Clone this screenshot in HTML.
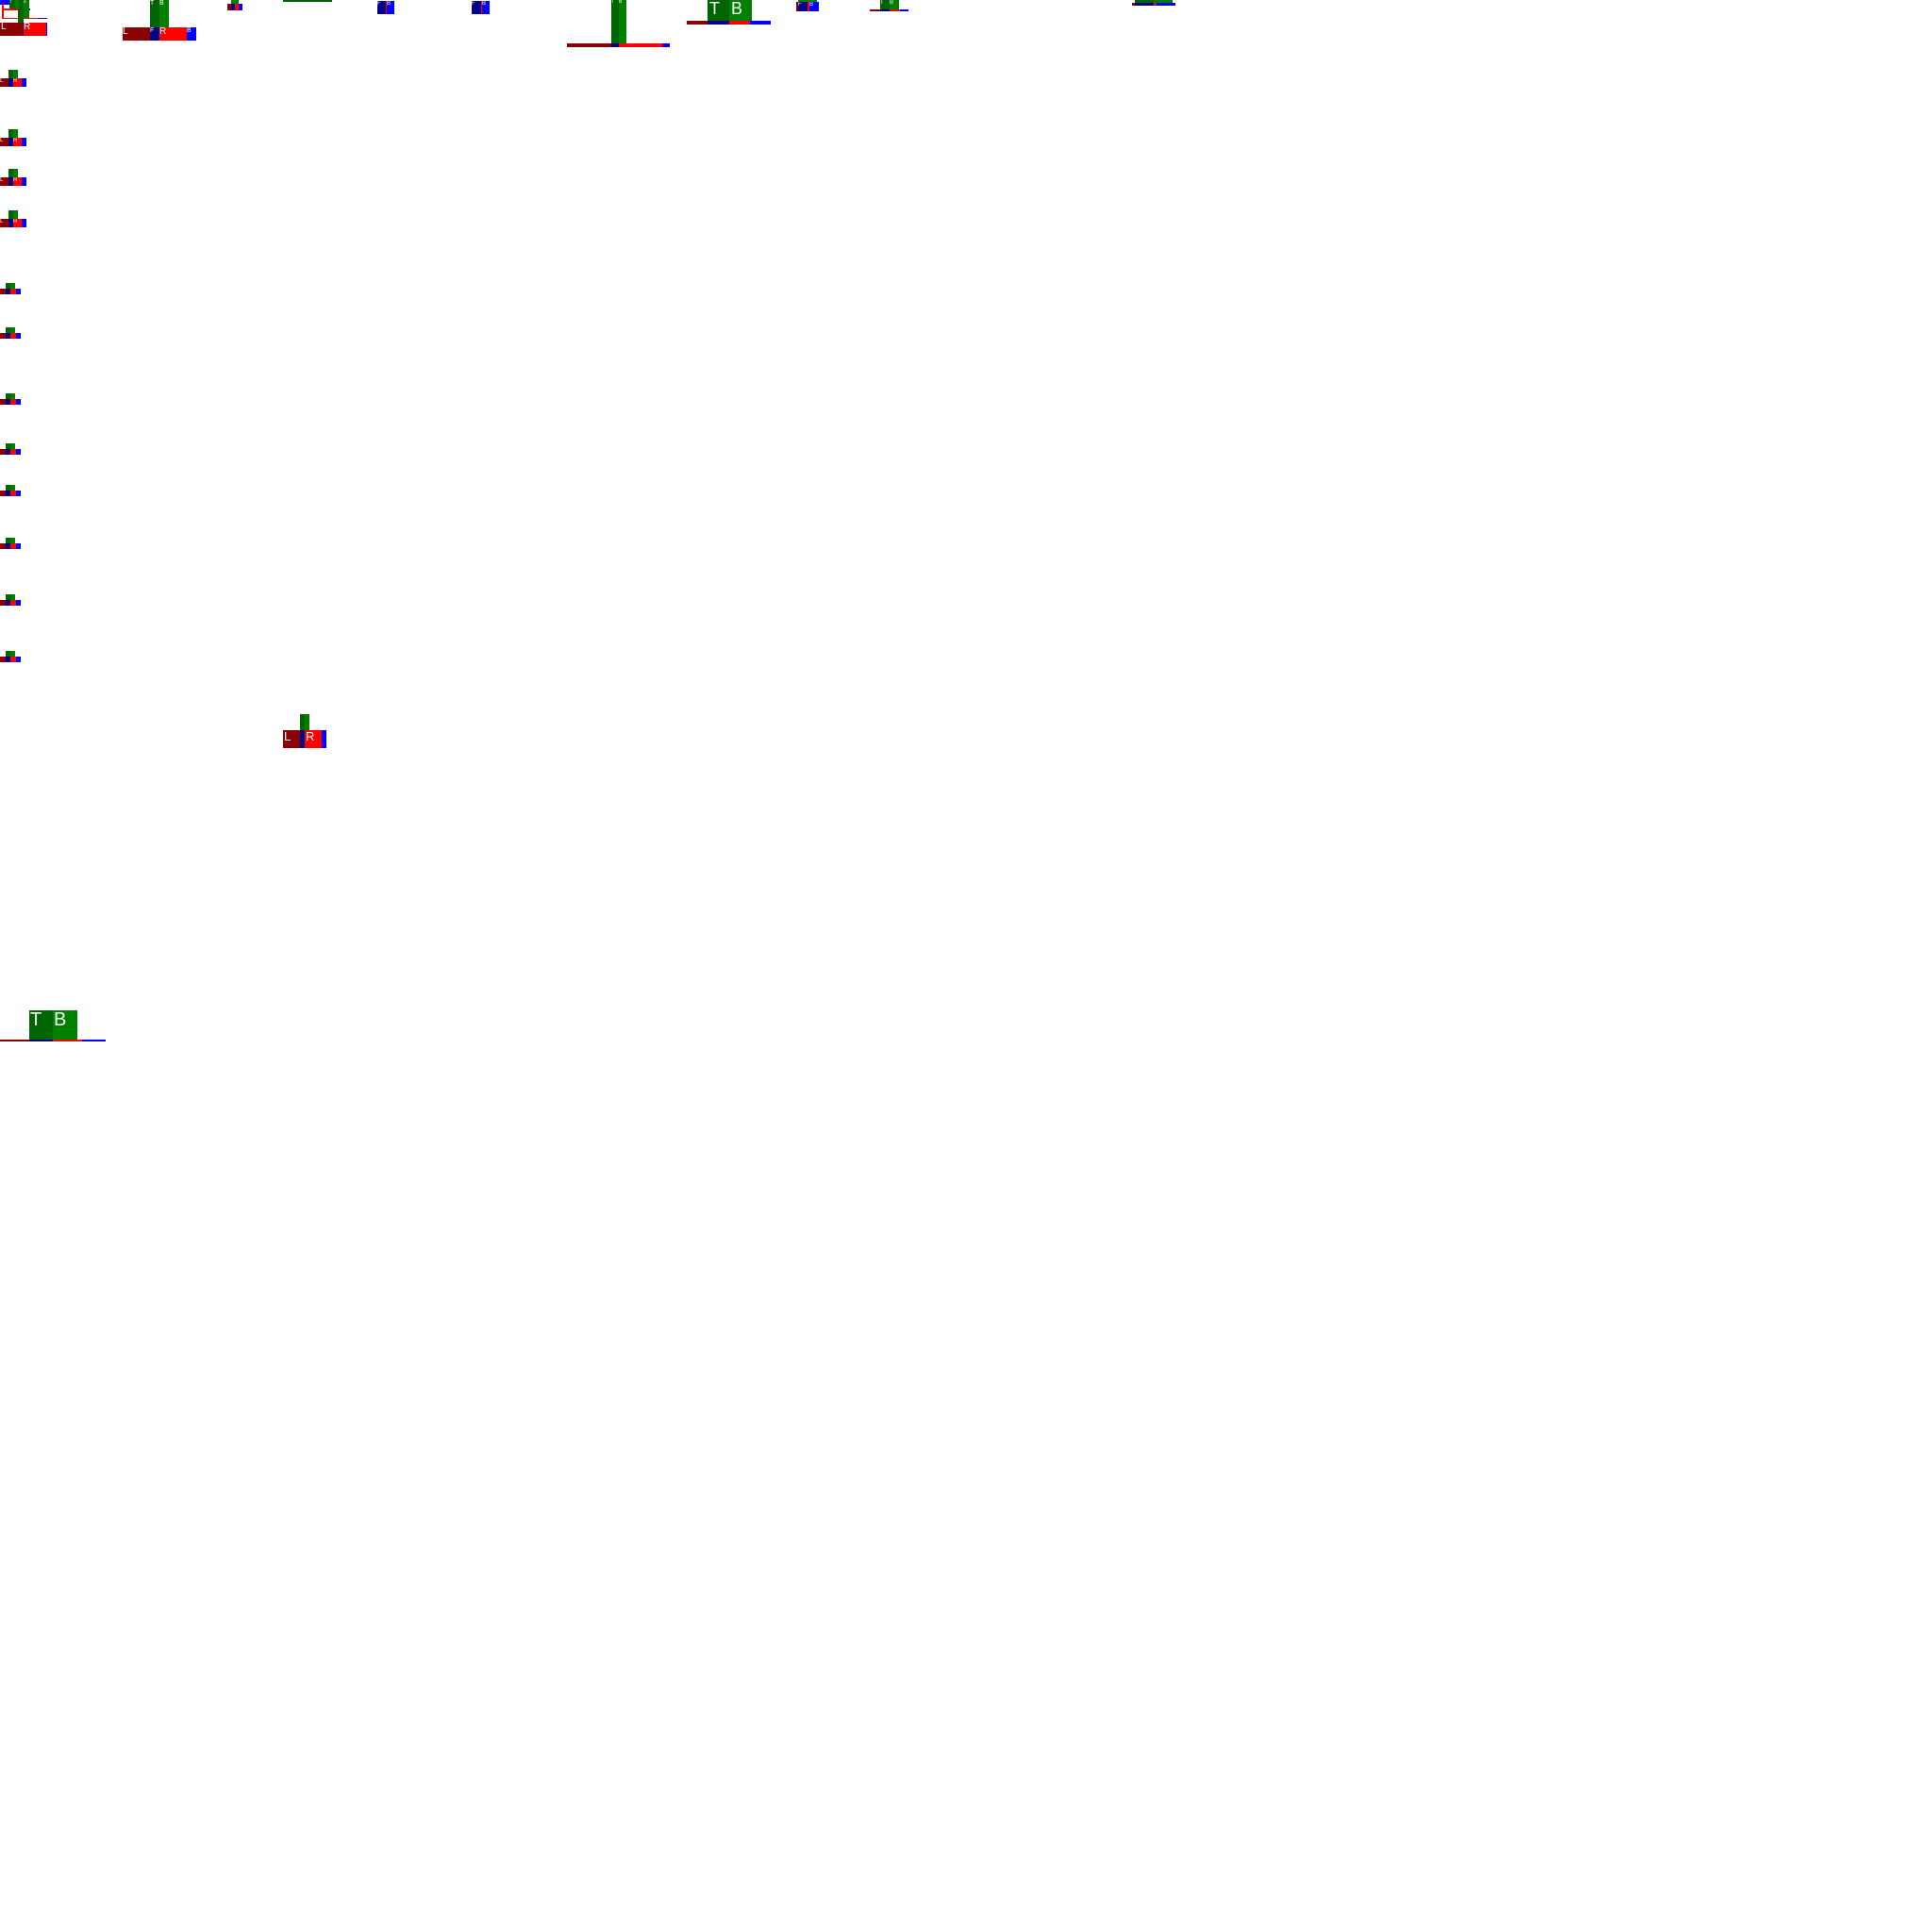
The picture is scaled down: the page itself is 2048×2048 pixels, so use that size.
<!DOCTYPE html>
<html><head><meta charset="utf-8"><style>
html,body{margin:0;padding:0;width:2048px;height:2048px;background:#fff;overflow:hidden;position:relative;font-family:"Liberation Sans",sans-serif}
div{position:absolute;color:#fff;overflow:hidden;line-height:1}
.dg{background:#006400}.g{background:#008000}.l{background:#8b0000}.f{background:#00008b}.r{background:#ff0000}.b{background:#0000ff}
</style></head><body>
<!-- cluster 1 -->
<div class="b" style="left:0;top:0;width:10px;height:5px"></div>
<div class="r" style="left:2px;top:4px;width:2px;height:16px"></div>
<div class="r" style="left:4px;top:9px;width:24px;height:2px"></div>
<div class="b" style="left:20px;top:9px;width:12px;height:2px"></div>
<div class="r" style="left:4px;top:19px;width:40px;height:1px"></div>
<div class="b" style="left:40px;top:19px;width:10px;height:1px"></div>
<div class="dg" style="left:19px;top:0;width:6px;height:24px"></div>
<div class="g" style="left:25px;top:0;width:6px;height:19px;font-size:4px">B</div>
<div class="dg" style="left:10px;top:0;width:6px;height:9px;font-size:4px">T</div>
<div class="g" style="left:16px;top:0;width:4px;height:9px"></div>
<div class="l" style="left:0;top:24px;width:24px;height:14px;font-size:10px;padding-left:1px">L</div>
<div class="f" style="left:24px;top:24px;width:1px;height:14px"></div>
<div class="r" style="left:25px;top:24px;width:24px;height:14px;font-size:10px">R</div>
<div class="b" style="left:49px;top:24px;width:1px;height:14px"></div>
<!-- cluster 2 -->
<div class="dg" style="left:159px;top:0;width:10px;height:29px;font-size:7px">T</div>
<div class="g" style="left:169px;top:0;width:10px;height:29px;font-size:7px">B</div>
<div class="l" style="left:130px;top:29px;width:29px;height:14px;font-size:10px">L</div>
<div class="f" style="left:159px;top:29px;width:10px;height:14px;font-size:7px">F</div>
<div class="r" style="left:169px;top:29px;width:29px;height:14px;font-size:10px">R</div>
<div class="b" style="left:198px;top:29px;width:10px;height:14px;font-size:7px">B</div>
<!-- cluster 3 -->
<div class="g" style="left:245px;top:0;width:8px;height:4px"></div>
<div class="l" style="left:241px;top:4px;width:4px;height:7px"></div>
<div class="f" style="left:245px;top:4px;width:4px;height:7px"></div>
<div class="r" style="left:249px;top:4px;width:4px;height:7px"></div>
<div class="b" style="left:253px;top:4px;width:4px;height:7px"></div>
<div class="dg" style="left:300px;top:0;width:52px;height:2px"></div>
<!-- small FB -->
<div class="f" style="left:400px;top:1px;width:9px;height:14px;font-size:6px">F</div>
<div class="r" style="left:409px;top:1px;width:1px;height:14px"></div>
<div class="b" style="left:410px;top:1px;width:8px;height:14px;font-size:6px">B</div>
<div class="f" style="left:500px;top:1px;width:10px;height:14px;font-size:6px">F</div>
<div class="r" style="left:510px;top:1px;width:1px;height:14px"></div>
<div class="b" style="left:511px;top:1px;width:8px;height:14px;font-size:6px">B</div>
<!-- tall -->
<div class="dg" style="left:648px;top:0;width:8px;height:46px;font-size:5px">T</div>
<div class="g" style="left:656px;top:0;width:8px;height:46px;font-size:5px">B</div>
<div class="l" style="left:601px;top:46px;width:47px;height:4px"></div>
<div class="f" style="left:648px;top:46px;width:8px;height:4px"></div>
<div class="r" style="left:656px;top:46px;width:46px;height:4px"></div>
<div class="b" style="left:702px;top:46px;width:8px;height:4px"></div>
<!-- TB big -->
<div class="dg" style="left:750px;top:0;width:23px;height:22px;font-size:18px;padding-left:2px">T</div>
<div class="g" style="left:773px;top:0;width:22px;height:22px;font-size:18px;padding-left:2px">B</div>
<div class="l" style="left:728px;top:22px;width:22px;height:4px"></div>
<div class="f" style="left:750px;top:22px;width:23px;height:4px"></div>
<div class="r" style="left:773px;top:22px;width:22px;height:4px"></div>
<div class="b" style="left:795px;top:22px;width:22px;height:4px"></div>
<!-- FB -->
<div class="g" style="left:846px;top:0;width:20px;height:2px"></div>
<div class="l" style="left:844px;top:2px;width:2px;height:10px"></div>
<div class="f" style="left:846px;top:2px;width:10px;height:10px;font-size:6px">F</div>
<div class="r" style="left:856px;top:2px;width:2px;height:10px"></div>
<div class="b" style="left:858px;top:2px;width:10px;height:10px;font-size:6px">B</div>
<!-- TB small -->
<div class="dg" style="left:933px;top:0;width:10px;height:10px;font-size:6px">T</div>
<div class="g" style="left:943px;top:0;width:10px;height:10px;font-size:6px">B</div>
<div class="l" style="left:922px;top:10px;width:11px;height:2px"></div>
<div class="f" style="left:933px;top:10px;width:10px;height:2px"></div>
<div class="r" style="left:943px;top:10px;width:11px;height:2px"></div>
<div class="b" style="left:954px;top:10px;width:9px;height:2px"></div>
<!-- flat -->
<div class="dg" style="left:1203px;top:0;width:20px;height:3px"></div>
<div class="g" style="left:1223px;top:0;width:20px;height:3px"></div>
<div class="l" style="left:1200px;top:3px;width:3px;height:3px"></div>
<div class="f" style="left:1203px;top:3px;width:20px;height:3px"></div>
<div class="r" style="left:1223px;top:3px;width:3px;height:3px"></div>
<div class="b" style="left:1226px;top:3px;width:20px;height:3px"></div>
<!-- column medium -->
<div style="left:0;top:74px;width:30px;height:18px">
 <div class="dg" style="left:9px;top:0;width:5px;height:9px"></div><div class="g" style="left:14px;top:0;width:5px;height:9px"></div>
 <div class="l" style="left:0;top:9px;width:9px;height:9px;font-size:6px">L</div><div class="f" style="left:9px;top:9px;width:5px;height:9px"></div>
 <div class="r" style="left:14px;top:9px;width:9px;height:9px;font-size:6px">R</div><div class="b" style="left:23px;top:9px;width:5px;height:9px"></div>
</div>
<div style="left:0;top:137px;width:30px;height:18px">
 <div class="dg" style="left:9px;top:0;width:5px;height:9px"></div><div class="g" style="left:14px;top:0;width:5px;height:9px"></div>
 <div class="l" style="left:0;top:9px;width:9px;height:9px;font-size:6px">L</div><div class="f" style="left:9px;top:9px;width:5px;height:9px"></div>
 <div class="r" style="left:14px;top:9px;width:9px;height:9px;font-size:6px">R</div><div class="b" style="left:23px;top:9px;width:5px;height:9px"></div>
</div>
<div style="left:0;top:179px;width:30px;height:18px">
 <div class="dg" style="left:9px;top:0;width:5px;height:9px"></div><div class="g" style="left:14px;top:0;width:5px;height:9px"></div>
 <div class="l" style="left:0;top:9px;width:9px;height:9px;font-size:6px">L</div><div class="f" style="left:9px;top:9px;width:5px;height:9px"></div>
 <div class="r" style="left:14px;top:9px;width:9px;height:9px;font-size:6px">R</div><div class="b" style="left:23px;top:9px;width:5px;height:9px"></div>
</div>
<div style="left:0;top:223px;width:30px;height:18px">
 <div class="dg" style="left:9px;top:0;width:5px;height:9px"></div><div class="g" style="left:14px;top:0;width:5px;height:9px"></div>
 <div class="l" style="left:0;top:9px;width:9px;height:9px;font-size:6px">L</div><div class="f" style="left:9px;top:9px;width:5px;height:9px"></div>
 <div class="r" style="left:14px;top:9px;width:9px;height:9px;font-size:6px">R</div><div class="b" style="left:23px;top:9px;width:5px;height:9px"></div>
</div>
<!-- column small -->
<div style="left:0;top:300px;width:24px;height:12px"><div class="dg" style="left:6px;top:0;width:5px;height:6px"></div><div class="g" style="left:11px;top:0;width:5px;height:6px"></div><div class="l" style="left:0;top:6px;width:6px;height:6px"></div><div class="f" style="left:6px;top:6px;width:5px;height:6px"></div><div class="r" style="left:11px;top:6px;width:6px;height:6px"></div><div class="b" style="left:17px;top:6px;width:5px;height:6px"></div></div>
<div style="left:0;top:347px;width:24px;height:12px"><div class="dg" style="left:6px;top:0;width:5px;height:6px"></div><div class="g" style="left:11px;top:0;width:5px;height:6px"></div><div class="l" style="left:0;top:6px;width:6px;height:6px"></div><div class="f" style="left:6px;top:6px;width:5px;height:6px"></div><div class="r" style="left:11px;top:6px;width:6px;height:6px"></div><div class="b" style="left:17px;top:6px;width:5px;height:6px"></div></div>
<div style="left:0;top:417px;width:24px;height:12px"><div class="dg" style="left:6px;top:0;width:5px;height:6px"></div><div class="g" style="left:11px;top:0;width:5px;height:6px"></div><div class="l" style="left:0;top:6px;width:6px;height:6px"></div><div class="f" style="left:6px;top:6px;width:5px;height:6px"></div><div class="r" style="left:11px;top:6px;width:6px;height:6px"></div><div class="b" style="left:17px;top:6px;width:5px;height:6px"></div></div>
<div style="left:0;top:470px;width:24px;height:12px"><div class="dg" style="left:6px;top:0;width:5px;height:6px"></div><div class="g" style="left:11px;top:0;width:5px;height:6px"></div><div class="l" style="left:0;top:6px;width:6px;height:6px"></div><div class="f" style="left:6px;top:6px;width:5px;height:6px"></div><div class="r" style="left:11px;top:6px;width:6px;height:6px"></div><div class="b" style="left:17px;top:6px;width:5px;height:6px"></div></div>
<div style="left:0;top:514px;width:24px;height:12px"><div class="dg" style="left:6px;top:0;width:5px;height:6px"></div><div class="g" style="left:11px;top:0;width:5px;height:6px"></div><div class="l" style="left:0;top:6px;width:6px;height:6px"></div><div class="f" style="left:6px;top:6px;width:5px;height:6px"></div><div class="r" style="left:11px;top:6px;width:6px;height:6px"></div><div class="b" style="left:17px;top:6px;width:5px;height:6px"></div></div>
<div style="left:0;top:570px;width:24px;height:12px"><div class="dg" style="left:6px;top:0;width:5px;height:6px"></div><div class="g" style="left:11px;top:0;width:5px;height:6px"></div><div class="l" style="left:0;top:6px;width:6px;height:6px"></div><div class="f" style="left:6px;top:6px;width:5px;height:6px"></div><div class="r" style="left:11px;top:6px;width:6px;height:6px"></div><div class="b" style="left:17px;top:6px;width:5px;height:6px"></div></div>
<div style="left:0;top:630px;width:24px;height:12px"><div class="dg" style="left:6px;top:0;width:5px;height:6px"></div><div class="g" style="left:11px;top:0;width:5px;height:6px"></div><div class="l" style="left:0;top:6px;width:6px;height:6px"></div><div class="f" style="left:6px;top:6px;width:5px;height:6px"></div><div class="r" style="left:11px;top:6px;width:6px;height:6px"></div><div class="b" style="left:17px;top:6px;width:5px;height:6px"></div></div>
<div style="left:0;top:690px;width:24px;height:12px"><div class="dg" style="left:6px;top:0;width:5px;height:6px"></div><div class="g" style="left:11px;top:0;width:5px;height:6px"></div><div class="l" style="left:0;top:6px;width:6px;height:6px"></div><div class="f" style="left:6px;top:6px;width:5px;height:6px"></div><div class="r" style="left:11px;top:6px;width:6px;height:6px"></div><div class="b" style="left:17px;top:6px;width:5px;height:6px"></div></div>
<!-- mid cluster -->
<div class="dg" style="left:318px;top:757px;width:5px;height:17px"></div>
<div class="g" style="left:323px;top:757px;width:5px;height:17px"></div>
<div class="l" style="left:300px;top:774px;width:18px;height:19px;font-size:13px;padding-left:1px">L</div>
<div class="f" style="left:318px;top:774px;width:5px;height:19px"></div>
<div class="r" style="left:323px;top:774px;width:18px;height:19px;font-size:13px;padding-left:1px">R</div>
<div class="b" style="left:341px;top:774px;width:5px;height:19px"></div>
<!-- bottom TB -->
<div class="dg" style="left:31px;top:1071px;width:25px;height:31px;font-size:20px;padding-left:1px">T</div>
<div class="g" style="left:56px;top:1071px;width:25px;height:31px;font-size:20px;padding-left:1px">B</div>
<div class="l" style="left:0;top:1102px;width:31px;height:2px"></div>
<div class="f" style="left:31px;top:1102px;width:25px;height:2px"></div>
<div class="r" style="left:56px;top:1102px;width:31px;height:2px"></div>
<div class="b" style="left:87px;top:1102px;width:25px;height:2px"></div>
</body></html>
